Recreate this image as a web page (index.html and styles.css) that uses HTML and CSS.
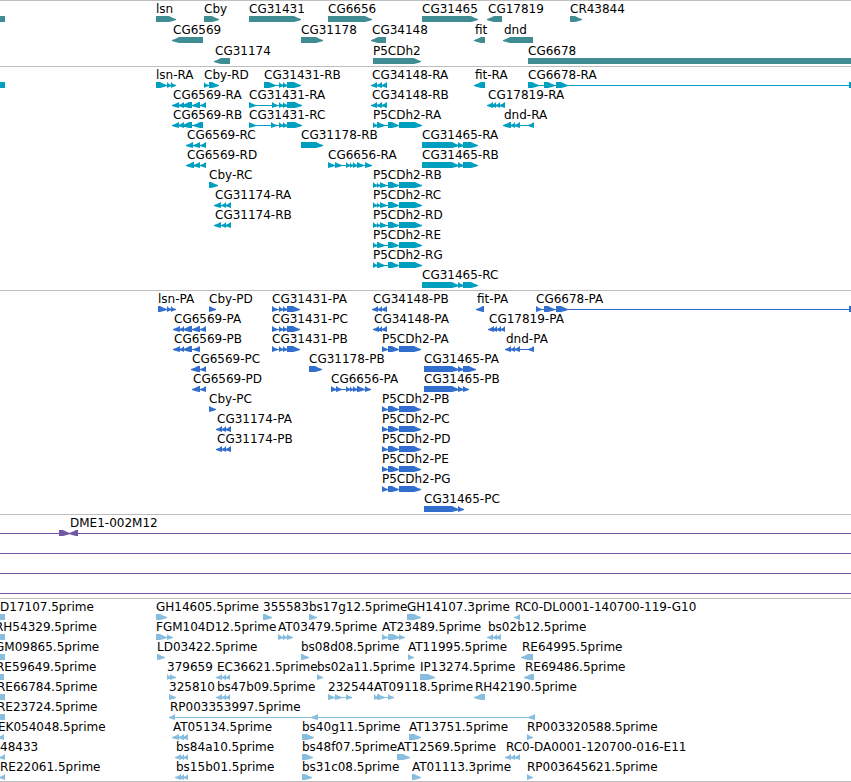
FILE: index.html
```html
<!DOCTYPE html>
<html lang="en">
<head>
    <meta charset="UTF-8">
    <meta name="viewport" content="width=device-width, initial-scale=1.0">
    <title>Genome Browser</title>
    <link rel="stylesheet" href="styles.css">
</head>
<body>
    <main class="browser">
        <section class="track genes" aria-label="Genes"><svg id="genes"></svg></section>
        <section class="track transcripts" aria-label="Transcripts"><svg id="transcripts"></svg></section>
        <section class="track proteins" aria-label="Proteins"><svg id="proteins"></svg></section>
        <section class="track clones" aria-label="Clones"><svg id="clones"></svg></section>
        <section class="track ests" aria-label="ESTs"><svg id="ests"></svg></section>
    </main>
    <script src="tracks.js"></script>
</body>
</html>
```
FILE: styles.css
```css
body {
    margin: 0;
    background-color: #ffffff;
    color: #000000;
    font-family: "DejaVu Sans", sans-serif;
    font-size: 12px;
}

.browser {
    display: flex;
    flex-direction: column;
    border-bottom: 1px solid #bebebe;
    overflow: hidden;
}

.track {
    border-top: 1px solid #bebebe;
}

.track svg {
    display: block;
    width: 100%;
}

.track text {
    fill: #000000;
}

.track path {
    fill: currentColor;
}

.track rect {
    fill: currentColor;
    shape-rendering: crispEdges;
}

.genes {
    color: #408c93;
}

.transcripts {
    color: #009fc0;
}

.proteins {
    color: #326ecd;
}

.clones {
    color: #7357a5;
}

.ests {
    color: #87bddf;
}
```
FILE: tracks.js
```js
const SVG_NS = "http://www.w3.org/2000/svg";
const BAR_HEIGHT = 6;
const HEAD = 6;

// feature: [label, label x, strand, start, end, start, end, ...]
// strand is "+", "-" or "" for a bar without an arrow head
const GENES = [
    [
        ["", 0, "", -10, 5],
        ["lsn", 156, "+", 156, 175],
        ["Cby", 204, "+", 204, 218],
        ["CG31431", 249, "+", 249, 300],
        ["CG6656", 328, "+", 328, 371],
        ["CG31465", 422, "+", 422, 477],
        ["CG17819", 488, "-", 488, 502],
        ["CR43844", 570, "+", 570, 581]
    ],
    [
        ["CG6569", 173, "-", 173, 203],
        ["CG31178", 301, "+", 301, 322],
        ["CG34148", 372, "-", 372, 386],
        ["fit", 475, "-", 475, 485],
        ["dnd", 504, "-", 504, 533]
    ],
    [
        ["CG31174", 215, "-", 215, 230],
        ["P5CDh2", 373, "+", 373, 420],
        ["CG6678", 528, "", 528, 4000]
    ]
];

const TRANSCRIPTS = [
    [
        ["", 0, "", -10, 5],
        ["lsn-RA", 156, "+", 156, 166, 167, 171, 171, 175],
        ["Cby-RD", 204, "+", 204, 208, 209, 218],
        ["CG31431-RB", 264, "+", 264, 275, 279, 283, 283, 287, 287, 300],
        ["CG34148-RA", 372, "-", 372, 377, 377, 382, 382, 387],
        ["fit-RA", 475, "-", 475, 485],
        ["CG6678-RA", 528, "+", 528, 538, 544, 554, 556, 567, 849, 900]
    ],
    [
        ["CG6569-RA", 173, "-", 173, 179, 179, 184, 183, 192, 193, 200, 201, 206],
        ["CG31431-RA", 249, "+", 249, 255, 272, 277, 279, 283, 283, 287, 287, 301],
        ["CG34148-RB", 372, "-", 372, 377, 377, 382, 382, 387],
        ["CG17819-RA", 488, "-", 488, 493, 492, 496, 496, 500, 500, 505]
    ],
    [
        ["CG6569-RB", 173, "-", 173, 179, 179, 184, 183, 192, 194, 203],
        ["CG31431-RC", 249, "+", 249, 255, 271, 276, 279, 283, 283, 287, 287, 301],
        ["P5CDh2-RA", 373, "+", 373, 377, 377, 384, 388, 398, 399, 421],
        ["dnd-RA", 504, "-", 504, 511, 511, 515, 515, 520, 529, 534]
    ],
    [
        ["CG6569-RC", 187, "-", 187, 193, 194, 200, 201, 206],
        ["CG31178-RB", 301, "+", 301, 322],
        ["CG31465-RA", 422, "+", 422, 458, 458, 463, 463, 477]
    ],
    [
        ["CG6569-RD", 187, "-", 187, 194, 194, 200, 201, 206],
        ["CG6656-RA", 328, "+", 328, 334, 335, 341, 346, 350, 350, 353, 353, 357, 357, 363, 365, 371],
        ["CG31465-RB", 422, "+", 422, 458, 458, 463, 463, 477]
    ],
    [
        ["Cby-RC", 209, "+", 209, 217],
        ["P5CDh2-RB", 373, "+", 373, 377, 377, 380, 380, 386, 388, 398, 399, 421]
    ],
    [
        ["CG31174-RA", 215, "-", 215, 221, 222, 226, 226, 231],
        ["P5CDh2-RC", 373, "+", 373, 377, 377, 380, 380, 386, 388, 398, 399, 421]
    ],
    [
        ["CG31174-RB", 215, "-", 215, 221, 222, 226, 226, 231],
        ["P5CDh2-RD", 373, "+", 373, 377, 377, 380, 380, 386, 388, 398, 399, 421]
    ],
    [
        ["P5CDh2-RE", 373, "+", 373, 377, 377, 384, 388, 398, 399, 421]
    ],
    [
        ["P5CDh2-RG", 373, "+", 373, 377, 377, 384, 388, 398, 399, 421]
    ],
    [
        ["CG31465-RC", 422, "+", 422, 458, 458, 463, 463, 477]
    ]
];

const PROTEINS = [
    [
        ["lsn-PA", 158, "+", 158, 166, 167, 171, 171, 175],
        ["Cby-PD", 209, "+", 209, 215],
        ["CG31431-PA", 272, "+", 272, 277, 279, 283, 283, 287, 287, 299],
        ["CG34148-PB", 373, "-", 373, 378, 378, 382, 382, 387],
        ["fit-PA", 477, "-", 477, 484],
        ["CG6678-PA", 536, "+", 536, 541, 544, 554, 556, 567, 849, 900]
    ],
    [
        ["CG6569-PA", 174, "-", 174, 180, 180, 184, 184, 192, 193, 200, 201, 206],
        ["CG31431-PC", 272, "+", 272, 277, 279, 283, 283, 287, 287, 299],
        ["CG34148-PA", 374, "-", 374, 379, 378, 382, 382, 387],
        ["CG17819-PA", 489, "-", 489, 494, 493, 497, 497, 501, 501, 505]
    ],
    [
        ["CG6569-PB", 174, "-", 174, 180, 180, 184, 184, 192, 194, 200],
        ["CG31431-PB", 272, "+", 272, 277, 279, 283, 283, 287, 287, 299],
        ["P5CDh2-PA", 382, "+", 382, 387, 388, 398, 399, 420],
        ["dnd-PA", 506, "-", 506, 511, 511, 515, 515, 520, 529, 534]
    ],
    [
        ["CG6569-PC", 192, "-", 192, 200, 201, 206],
        ["CG31178-PB", 309, "+", 309, 321],
        ["CG31465-PA", 424, "+", 424, 458, 458, 463, 463, 475]
    ],
    [
        ["CG6569-PD", 193, "-", 193, 200, 201, 206],
        ["CG6656-PA", 331, "+", 331, 336, 336, 341, 346, 350, 350, 353, 353, 357, 357, 364, 365, 370],
        ["CG31465-PB", 424, "+", 424, 458, 458, 463, 463, 468]
    ],
    [
        ["Cby-PC", 209, "+", 209, 215],
        ["P5CDh2-PB", 382, "+", 382, 387, 388, 398, 399, 420]
    ],
    [
        ["CG31174-PA", 217, "-", 217, 222, 222, 226, 226, 231],
        ["P5CDh2-PC", 382, "+", 382, 387, 388, 398, 399, 420]
    ],
    [
        ["CG31174-PB", 217, "-", 217, 222, 222, 226, 226, 231],
        ["P5CDh2-PD", 382, "+", 382, 387, 388, 398, 399, 420]
    ],
    [
        ["P5CDh2-PE", 382, "+", 382, 387, 388, 398, 399, 420]
    ],
    [
        ["P5CDh2-PG", 382, "+", 382, 387, 388, 398, 399, 420]
    ],
    [
        ["CG31465-PC", 424, "+", 424, 458, 458, 463]
    ]
];

const CLONES = [
    [
        ["", 0, "+", -20, -10, 59, 69],
        ["DME1-002M12", 70, "-", 70, 78, 4000, 4010]
    ],
    [["", 0, "", -20, -10, 4000, 4010]],
    [["", 0, "", -20, -10, 4000, 4010]],
    [["", 0, "", -20, -10, 4000, 4010]]
];

const ESTS = [
    [
        ["D17107.5prime", 0, "", -10, 5],
        ["GH14605.5prime", 156, "+", 156, 166],
        ["355583", 263, "+", 263, 271],
        ["bs17g12.5prime", 309, "+", 309, 316],
        ["GH14107.3prime", 407, "+", 407, 420],
        ["RC0-DL0001-140700-119-G10", 515, "-", 515, 520]
    ],
    [
        ["RH54329.5prime", -5, "", -10, 5],
        ["FGM104D12.5prime", 156, "+", 156, 166, 167, 172],
        ["AT03479.5prime", 278, "+", 278, 283, 283, 287, 287, 292],
        ["AT23489.5prime", 382, "+", 382, 387, 388, 399, 399, 404],
        ["bs02b12.5prime", 488, "-", 488, 493, 493, 497, 496, 501]
    ],
    [
        ["GM09865.5prime", -5, "", -10, 5],
        ["LD03422.5prime", 157, "+", 157, 164],
        ["bs08d08.5prime", 301, "+", 301, 308],
        ["AT11995.5prime", 408, "+", 408, 413],
        ["RE64995.5prime", 522, "-", 522, 533]
    ],
    [
        ["RE59649.5prime", -4, "", -10, 4],
        ["379659", 167, "+", 167, 171, 170, 175],
        ["EC36621.5prime", 217, "-", 217, 222, 222, 226, 226, 230],
        ["bs02a11.5prime", 317, "+", 317, 322],
        ["IP13274.5prime", 420, "+", 420, 434],
        ["RE69486.5prime", 525, "-", 525, 534]
    ],
    [
        ["RE66784.5prime", -3, "", -10, 5],
        ["325810", 169, "+", 169, 175],
        ["bs47b09.5prime", 217, "-", 217, 222, 222, 226, 226, 230],
        ["232544", 328, "+", 328, 334, 335, 341, 346, 351],
        ["AT09118.5prime", 374, "+", 374, 378, 377, 384, 388, 393],
        ["RH42190.5prime", 475, "-", 475, 485]
    ],
    [
        ["RE23724.5prime", -3, "", -10, 5],
        ["RP003353997.5prime", 170, "-", 170, 175, 312, 318, 529, 535]
    ],
    [
        ["EK054048.5prime", -2, "-", -1, 4],
        ["AT05134.5prime", 173, "-", 173, 179, 179, 184, 183, 188],
        ["bs40g11.5prime", 302, "+", 302, 313],
        ["AT13751.5prime", 409, "+", 409, 420],
        ["RP003320588.5prime", 527, "+", 527, 532]
    ],
    [
        ["48433", 0, "-", 0, 5],
        ["bs84a10.5prime", 176, "-", 176, 181, 180, 184, 184, 188],
        ["bs48f07.5prime", 302, "+", 302, 312],
        ["AT12569.5prime", 397, "+", 397, 409],
        ["RC0-DA0001-120700-016-E11", 506, "-", 506, 511, 511, 515, 515, 520]
    ],
    [
        ["RE22061.5prime", 0, "-", 0, 5],
        ["bs15b01.5prime", 176, "-", 176, 181, 180, 184, 184, 188],
        ["bs31c08.5prime", 302, "+", 302, 311],
        ["AT01113.3prime", 412, "+", 412, 420],
        ["RP003645621.5prime", 527, "+", 527, 532]
    ]
];

function add(svg, name, attrs) {
    const el = document.createElementNS(SVG_NS, name);
    for (const key in attrs) {
        el.setAttribute(key, attrs[key]);
    }
    svg.appendChild(el);
    return el;
}

function exonPath(strand, start, end, top) {
    const bottom = top + BAR_HEIGHT;
    if (!strand) {
        return `M${start} ${top}H${end}V${bottom}H${start}Z`;
    }
    const head = Math.min(HEAD, end - start);
    const dir = strand === "+" ? 1 : -1;
    const tail = strand === "+" ? start : end;
    const tip = strand === "+" ? end : start;
    const neck = tip - dir * head;
    const bulge = tip - dir * 2;
    return `M${tail} ${top}H${neck}L${bulge} ${top + 2}L${tip + dir} ${top + 3}V${top + 4}` +
        `L${bulge} ${top + 5}L${neck} ${bottom}H${tail}Z`;
}

function drawTrack(id, lanes, laneHeight, padding) {
    const svg = document.getElementById(id);
    svg.setAttribute("height", lanes.length * laneHeight + padding);

    lanes.forEach((lane, i) => {
        const top = i * laneHeight + 15;
        lane.forEach(([label, labelX, strand, ...exons]) => {
            // intron line through the whole feature
            const start = exons[0];
            const end = exons[exons.length - 1];
            if (exons.length > 2) {
                add(svg, "rect", { x: start, y: top + 3, width: end - start, height: 1 });
            }
            let d = "";
            for (let n = 0; n < exons.length; n += 2) {
                d += exonPath(strand, exons[n], exons[n + 1], top);
            }
            add(svg, "path", { d });
            if (label) {
                add(svg, "text", { x: labelX, y: top - 3 }).textContent = label;
            }
        });
    });
}

drawTrack("genes", GENES, 21, 2);
drawTrack("transcripts", TRANSCRIPTS, 20, 3);
drawTrack("proteins", PROTEINS, 20, 3);
drawTrack("clones", CLONES, 20, 3);
drawTrack("ests", ESTS, 20, 2);
```
